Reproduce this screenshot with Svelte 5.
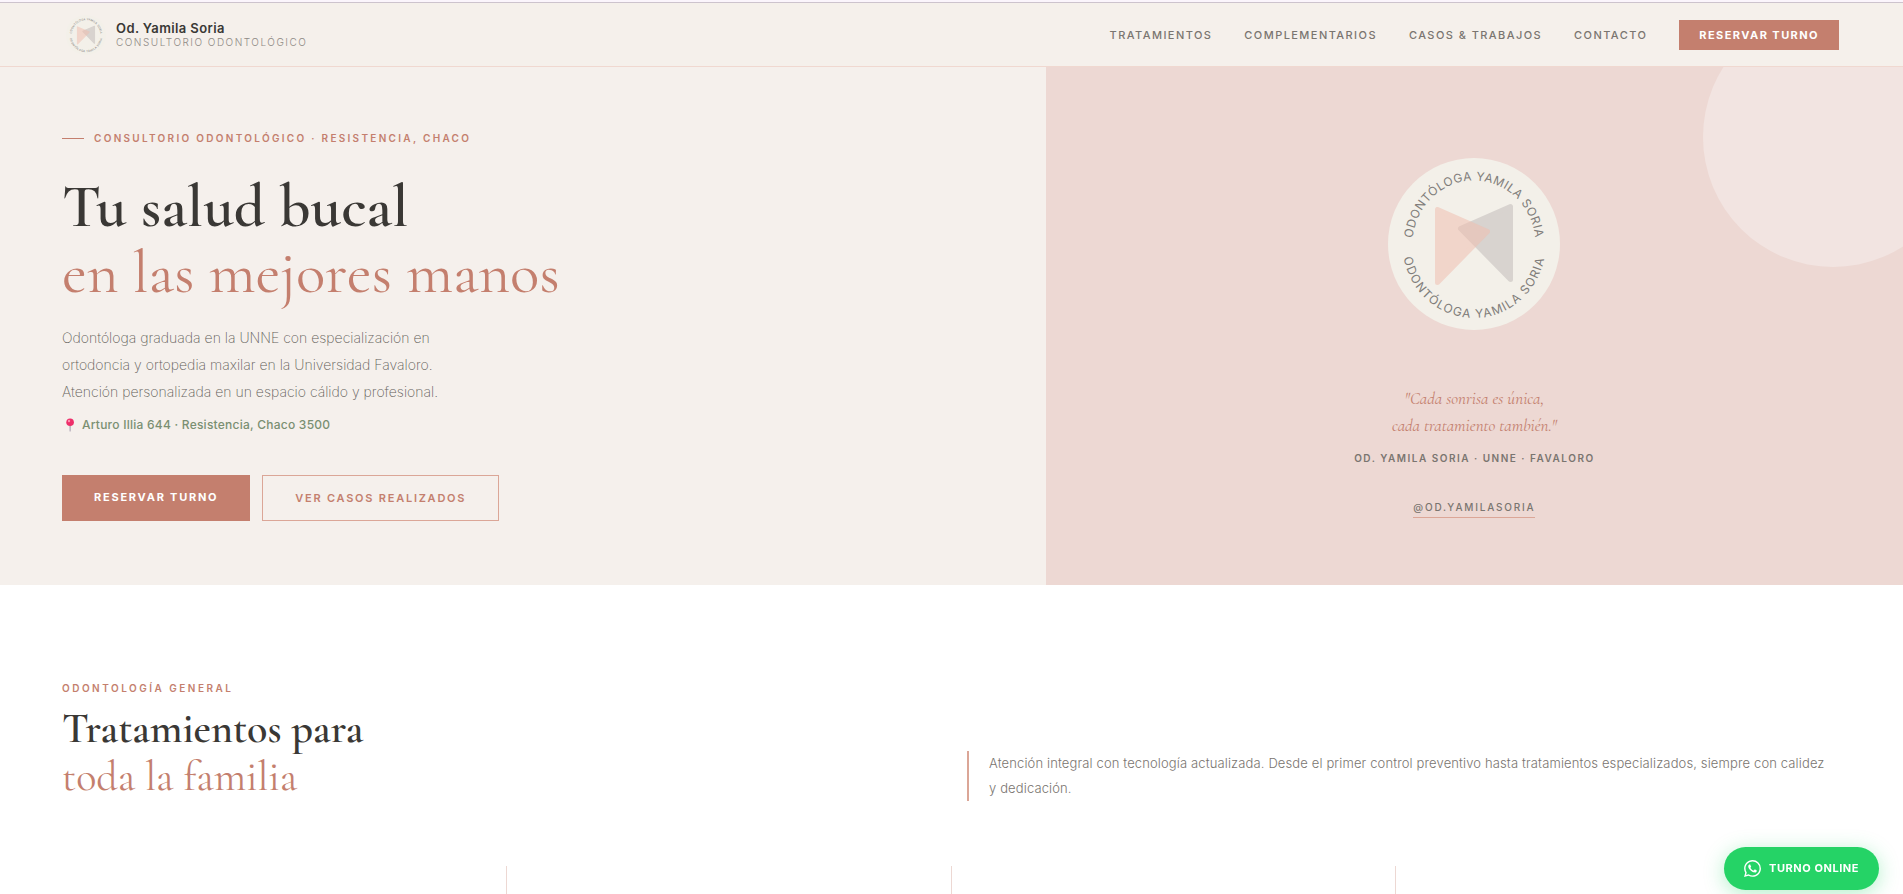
<script>
  const links = [
    { label: 'Tratamientos', href: '#tratamientos' },
    { label: 'Complementarios', href: '#complementarios' },
    { label: 'Casos & Trabajos', href: '#casos' },
    { label: 'Contacto', href: '#contacto' }
  ];
  const cards = [1, 2, 3, 4];
</script>

{#snippet emblem(id)}
  <svg class="emblem" viewBox="0 0 172 172" aria-hidden="true">
    <defs>
      <path id="{id}-top" d="M24.5 86a61.5 63.5 0 0 1 123 0" />
      <path id="{id}-bottom" d="M14.5 86a71.5 74 0 0 0 143 0" />
    </defs>
    <circle cx="86" cy="86" r="86" fill="#f3f0e9" />
    <path d="M122.5 48.5v73L72.5 70.5z" fill="#d8d3cf" stroke="#d8d3cf" stroke-width="5" stroke-linejoin="round" />
    <g opacity="0.54">
      <path d="M49.5 51.5v73L99.5 73.5z" fill="#f0bfb0" stroke="#f0bfb0" stroke-width="5" stroke-linejoin="round" />
    </g>
    <g class="ring" text-anchor="middle">
      <text letter-spacing="0.5"><textPath href="#{id}-top" startOffset="50%">ODONTÓLOGA YAMILA SORIA</textPath></text>
      <text letter-spacing="1.2"><textPath href="#{id}-bottom" startOffset="50%">ODONTÓLOGA YAMILA SORIA</textPath></text>
    </g>
  </svg>
{/snippet}

<div class="strip"></div>

<header class="nav">
  <a class="brand" href="#inicio">
    <span class="brand-logo">{@render emblem('small')}</span>
    <span class="brand-text">
      <strong>Od. Yamila Soria</strong>
      <span>Consultorio Odontológico</span>
    </span>
  </a>
  <nav aria-label="Principal">
    {#each links as link}
      <a href={link.href}>{link.label}</a>
    {/each}
    <a class="nav-cta" href="#reservar">Reservar turno</a>
  </nav>
</header>

<main>
  <section class="hero" id="inicio">
    <div class="hero-copy">
      <p class="hero-eyebrow">Consultorio Odontológico · Resistencia, Chaco</p>
      <h1>Tu salud bucal<br /><em>en las mejores manos</em></h1>
      <p class="lead">
        Odontóloga graduada en la UNNE con especialización en ortodoncia y ortopedia maxilar en la
        Universidad Favaloro. Atención personalizada en un espacio cálido y profesional.
      </p>
      <p class="place">
        <svg viewBox="0 0 16 14" aria-hidden="true">
          <path d="M7.5 6h1.2l-.2 7.5h-.8z" fill="#9a8fa5" />
          <circle cx="8.1" cy="4.2" r="3.8" fill="#ee2f6a" />
          <circle cx="7" cy="3" r="1.2" fill="#ff8fb0" />
        </svg>
        Arturo Illia 644 · Resistencia, Chaco 3500
      </p>
      <div class="actions">
        <a class="btn primary" href="#reservar">Reservar turno</a>
        <a class="btn outline" href="#casos">Ver casos realizados</a>
      </div>
    </div>
    <div class="hero-panel">
      <div class="hero-logo">{@render emblem('large')}</div>
      <blockquote>"Cada sonrisa es única,<br />cada tratamiento también."</blockquote>
      <p class="credit">Od. Yamila Soria · UNNE · Favaloro</p>
      <a class="handle" href="#instagram">@od.yamilasoria</a>
    </div>
  </section>

  <section class="treatments" id="tratamientos">
    <div class="section-head">
      <div>
        <p class="eyebrow">Odontología general</p>
        <h2>Tratamientos para<br /><em>toda la familia</em></h2>
      </div>
      <p class="intro">
        Atención integral con tecnología actualizada. Desde el primer control preventivo hasta
        tratamientos especializados, siempre con calidez y&nbsp;dedicación.
      </p>
    </div>
    <div class="cards">
      {#each cards as card (card)}
        <div class="card"></div>
      {/each}
    </div>
  </section>
</main>

<a class="whatsapp" href="#whatsapp">
  <svg viewBox="0 0 24 24" fill="currentColor" aria-hidden="true">
    <path d="M17.472 14.382c-.297-.149-1.758-.867-2.030-.967-.273-.099-.471-.148-.67.150-.197.297-.767.966-.940 1.164-.173.199-.347.223-.644.075-.297-.150-1.255-.463-2.390-1.475-.883-.788-1.480-1.761-1.653-2.059-.173-.297-.018-.458.130-.606.134-.133.298-.347.446-.520.149-.174.198-.298.298-.497.099-.198.050-.371-.025-.520-.075-.149-.669-1.612-.916-2.207-.242-.579-.487-.500-.669-.510-.173-.008-.371-.010-.570-.010-.198 0-.520.074-.792.372-.272.297-1.040 1.016-1.040 2.479 0 1.462 1.065 2.875 1.213 3.074.149.198 2.096 3.200 5.077 4.487.709.306 1.262.489 1.694.625.712.227 1.360.195 1.871.118.571-.085 1.758-.719 2.006-1.413.248-.694.248-1.289.173-1.413-.074-.124-.272-.198-.570-.347m-5.421 7.403h-.004a9.870 9.870 0 0 1-5.031-1.378l-.361-.214-3.741.982.998-3.648-.235-.374a9.860 9.860 0 0 1-1.510-5.260c.001-5.450 4.436-9.884 9.888-9.884 2.640 0 5.122 1.030 6.988 2.898a9.825 9.825 0 0 1 2.893 6.994c-.003 5.450-4.437 9.884-9.885 9.884m8.413-18.297A11.815 11.815 0 0 0 12.050 0C5.495 0 .160 5.335.157 11.892c0 2.096.547 4.142 1.588 5.945L.057 24l6.305-1.654a11.882 11.882 0 0 0 5.683 1.448h.005c6.554 0 11.890-5.335 11.893-11.893a11.821 11.821 0 0 0-3.480-8.413z" />
  </svg>
  Turno online
</a>

<style>
  :global(body) {
    background: #fff;
    color: #3a3835;
    font-family: Inter, 'Liberation Sans', sans-serif;
  }

  :global(*) {
    box-sizing: border-box;
  }

  a {
    color: inherit;
    text-decoration: none;
  }

  p,
  h1,
  h2,
  blockquote {
    margin: 0;
  }

  .strip {
    height: 3px;
    background: #fbf5fc;
    border-bottom: 1px solid #cdc3cd;
  }

  .nav {
    display: flex;
    align-items: center;
    justify-content: space-between;
    height: 64px;
    padding: 0 64px;
    background: #f5f0eb;
    border-bottom: 1px solid #f0d8d0;
  }

  .brand {
    display: flex;
    align-items: center;
    gap: 8px;
  }

  .brand-logo {
    display: flex;
    width: 44px;
    padding: 2px;
  }

  .emblem {
    display: block;
    width: 100%;
  }

  .ring {
    fill: #807d7a;
    font-size: 12px;
    font-weight: 400;
  }

  .brand-text {
    display: flex;
    flex-direction: column;
    line-height: 14px;
  }

  .brand-text strong {
    font-size: 13px;
    font-weight: 600;
    letter-spacing: 0.03em;
  }

  .brand-text span {
    color: #8f8a85;
    font-size: 10px;
    font-weight: 300;
    letter-spacing: 0.15em;
    text-transform: uppercase;
  }

  nav {
    display: flex;
    align-items: center;
    gap: 32px;
    color: #7a7570;
    font-size: 11px;
    font-weight: 500;
    letter-spacing: 0.13em;
    text-transform: uppercase;
  }

  .nav-cta {
    padding: 8px 20px;
    background: #c47f6e;
    color: #fff;
    font-weight: 700;
    line-height: 14px;
  }

  .hero {
    display: grid;
    grid-template-columns: 61fr 50fr;
  }

  .hero-copy {
    padding: 64px 62px;
    background: #f5f0ec;
  }

  .hero-eyebrow {
    display: flex;
    align-items: center;
    gap: 10px;
    margin-bottom: 28px;
    color: #c47f6e;
    font-size: 10px;
    font-weight: 600;
    line-height: 15px;
    letter-spacing: 0.23em;
    text-transform: uppercase;
  }

  .hero-eyebrow::before {
    content: '';
    width: 22px;
    height: 1px;
    background: #c47f6e;
  }

  h1,
  h2,
  blockquote {
    font-family: 'Cormorant Garamond', 'Liberation Serif', serif;
  }

  h1 {
    margin-bottom: 18px;
    font-size: 61px;
    font-weight: 600;
    line-height: 66px;
  }

  h1 em,
  h2 em {
    color: #c47f6e;
    font-style: normal;
    font-weight: 400;
  }

  .lead {
    max-width: 400px;
    color: #645f5a;
    font-size: 14px;
    font-weight: 200;
    line-height: 27px;
  }

  .place {
    display: flex;
    align-items: center;
    gap: 4px;
    margin: 11px 0 41px;
    color: #7a8f72;
    font-size: 12px;
    font-weight: 500;
    line-height: 18px;
    letter-spacing: 0.02em;
  }

  .place svg {
    width: 16px;
    height: 14px;
  }

  .actions {
    display: flex;
    gap: 12px;
  }

  .btn {
    padding: 15px 32px;
    font-size: 11px;
    line-height: 14px;
    letter-spacing: 0.16em;
    text-transform: uppercase;
  }

  .primary {
    background: #c47f6e;
    color: #fff;
    font-weight: 700;
  }

  .outline {
    border: 1px solid #dba697;
    color: #c47f6e;
    font-weight: 600;
  }

  .hero-panel {
    position: relative;
    display: flex;
    flex-direction: column;
    align-items: center;
    justify-content: center;
    overflow: hidden;
    padding-top: 24px;
    background: #edd8d3;
    text-align: center;
  }

  .hero-panel::before {
    content: '';
    position: absolute;
    top: -60px;
    right: -60px;
    width: 260px;
    height: 260px;
    border-radius: 50%;
    background: #f2e4e1;
  }

  .hero-logo {
    width: 172px;
    margin-bottom: 55px;
  }

  blockquote {
    margin-bottom: 11px;
    color: #c47f6e;
    font-size: 17px;
    font-style: italic;
    line-height: 27px;
  }

  .credit {
    margin-bottom: 33px;
    color: #7a7570;
    font-size: 10px;
    font-weight: 600;
    line-height: 16px;
    letter-spacing: 0.15em;
    text-transform: uppercase;
  }

  .handle {
    border-bottom: 1px solid #dba697;
    padding-bottom: 1px;
    color: #7a7570;
    font-size: 10px;
    font-weight: 500;
    line-height: 17px;
    letter-spacing: 0.18em;
    text-transform: uppercase;
  }

  .treatments {
    padding: 95px 62px 0;
  }

  .section-head {
    display: grid;
    grid-template-columns: 1fr 1fr;
    gap: 31px;
    align-items: end;
    margin-bottom: 65px;
  }

  .eyebrow {
    margin-bottom: 9px;
    color: #c47f6e;
    font-size: 10px;
    font-weight: 600;
    line-height: 16px;
    letter-spacing: 0.25em;
    text-transform: uppercase;
  }

  h2 {
    font-size: 42px;
    font-weight: 600;
    line-height: 48px;
  }

  .intro {
    padding-left: 20px;
    border-left: 2px solid #dba697;
    color: #7a7570;
    font-size: 13px;
    font-weight: 300;
    line-height: 25px;
    letter-spacing: 0.01em;
  }

  .cards {
    display: grid;
    grid-template-columns: repeat(4, 1fr);
    height: 28px;
    overflow: hidden;
  }

  .card {
    border-right: 1px solid #edd8d3;
  }

  .card:last-child {
    border-right: 0;
  }

  .whatsapp {
    position: fixed;
    right: 24px;
    bottom: 4px;
    display: flex;
    align-items: center;
    gap: 8px;
    padding: 13px 20px;
    border-radius: 50px;
    background: #25d366;
    box-shadow: 0 4px 20px rgba(37, 211, 102, 0.35);
    color: #fff;
    font-size: 11px;
    font-weight: 700;
    line-height: 17px;
    letter-spacing: 0.05em;
    text-transform: uppercase;
  }

  .whatsapp svg {
    width: 17px;
    height: 17px;
  }

  @media (max-width: 900px) {
    .nav {
      height: auto;
      padding: 12px 24px;
    }

    .nav nav a:not(.nav-cta) {
      display: none;
    }

    .hero,
    .section-head {
      grid-template-columns: 1fr;
    }

    .hero-panel {
      padding: 48px 24px;
    }
  }
</style>
